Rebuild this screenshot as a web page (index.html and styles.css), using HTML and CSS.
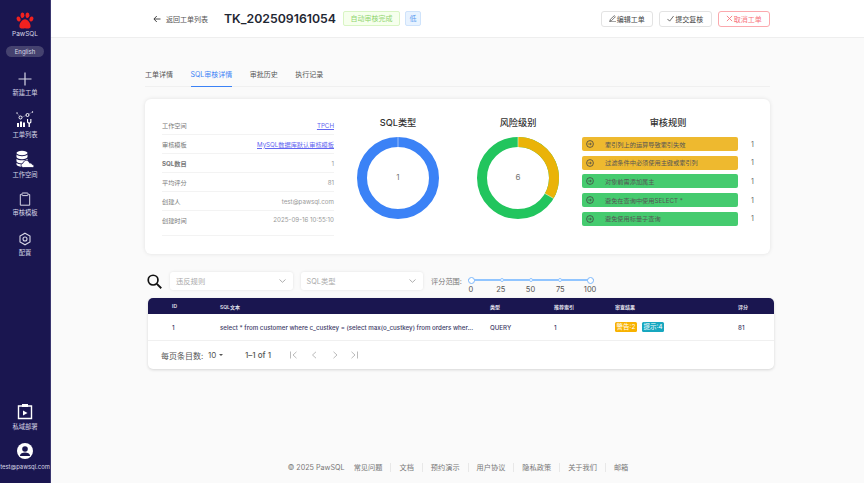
FILE: index.html
```html
<!DOCTYPE html>
<html>
<head>
    <title>PawSQL</title>
    <link rel="stylesheet" href="styles.css">
</head>
<body>
    <svg class="defs" width="0" height="0"><defs>
        <symbol id="rule-icon" viewBox="0 0 8 8"><circle cx="4" cy="4" r="3.400" fill="none" stroke="#444" stroke-width=".8"/><path d="M2.200 4h3M4 2.800L5.300 4 4 5.200" fill="none" stroke="#444" stroke-width=".7"/></symbol>
    </defs></svg>
    <div class="app">
        <aside class="sidebar">
            <div class="logo">
                <svg width="18" height="18" viewBox="0 0 18 18"><g fill="#f0211f"><ellipse cx="2.600" cy="7" rx="1.900" ry="2.600" transform="rotate(-18 2.600 7)"/><ellipse cx="6.500" cy="3.300" rx="1.900" ry="2.800"/><ellipse cx="11.500" cy="3.300" rx="1.900" ry="2.800"/><ellipse cx="15.400" cy="7" rx="1.900" ry="2.600" transform="rotate(18 15.400 7)"/><path d="M9 7.200c3 0 5.600 4 5.600 7 0 2.600-2.600 2.600-5.600 2.100-3 .5-5.600.5-5.600-2.100 0-3 2.600-7 5.600-7z"/></g></svg>
                <div class="logo-name">PawSQL</div>
            </div>
            <div class="lang">English</div>
            <nav class="nav">
                <a class="nav-item">
                    <svg class="nav-icon" width="18" height="18" viewBox="0 0 18 18"><path d="M9 2.500v13M2.500 9h13" stroke="#d8d7e6" stroke-width="1.200" fill="none"/></svg>
                    <span>新建工单</span>
                </a>
                <a class="nav-item tall">
                    <svg class="nav-icon" width="18" height="18" viewBox="0 0 18 18"><g fill="#fff"><rect x="1" y="13" width="2" height="4"/><rect x="4" y="11.500" width="2" height="5.500"/><rect x="7" y="12.500" width="2" height="4.500"/><path d="M11 9h1.100v2.800l1.100.9 1.100-.9V9h1.100v3.400l-1.500 1.300V17h-1.400v-3.300L11 12.400z"/></g><g fill="none" stroke="#fff"><circle cx="4.500" cy="7.500" r="1.500"/><circle cx="11.500" cy="5" r="1.500"/></g><g fill="#fff"><circle cx="1" cy="3" r=".7"/><circle cx="16.500" cy="2" r=".7"/></g><path d="M1 3l2.500 3.300M6 7l4-1.500M13 4l3.500-2" stroke="#fff" stroke-width=".3" fill="none"/></svg>
                    <span>工单列表</span>
                </a>
                <a class="nav-item tall">
                    <svg class="nav-icon" width="18" height="18" viewBox="0 0 18 18"><g fill="#fff"><ellipse cx="6" cy="3" rx="5.500" ry="2.200"/><path d="M.5 4.600v2.500c0 1.200 2.500 2.200 5.500 2.200s5.500-1 5.500-2.200V4.600C10.500 5.700 8.300 6.200 6 6.200S1.500 5.700.5 4.600z"/><path d="M.5 8.700v2.500c0 1.200 2.500 2.200 5.500 2.200s5.500-1 5.500-2.200V8.700c-1 1.100-3.200 1.600-5.500 1.600S1.500 9.800.5 8.700z"/><path d="M.5 12.800v1.700c0 1.200 2.500 2.200 5.500 2.200v-2.400c-2.300 0-4.500-.4-5.500-1.500z"/></g><path d="M7.500 17.500c-1.500 0-2.400-1-2.400-2.200 0-1.100.8-2 1.900-2.100.4-1.800 1.700-2.800 3.300-2.800 1.700 0 3 1.100 3.300 2.700 1.200-.2 2.400.4 2.700 1.500 1 .1 1.700.9 1.700 1.500 0 .7-.6 1.400-1.500 1.400z" fill="#fff" stroke="#1a1650" stroke-width=".8"/></svg>
                    <span>工作空间</span>
                </a>
                <a class="nav-item">
                    <svg class="nav-icon" width="18" height="18" viewBox="0 0 18 18"><path d="M5.500 4.500H4.300v10.700h9.400V4.500h-1.200" stroke="#d8d7e6" fill="none"/><rect x="6" y="3" width="6" height="2.600" rx=".5" stroke="#d8d7e6" fill="none"/></svg>
                    <span>审核模板</span>
                </a>
                <a class="nav-item">
                    <svg class="nav-icon" width="18" height="18" viewBox="0 0 18 18"><path d="M9 3.200l5 2.900v5.800l-5 2.900-5-2.900V6.100z" stroke="#d8d7e6" stroke-width="1.100" fill="none"/><circle cx="9" cy="9" r="2" stroke="#d8d7e6" stroke-width="1.100" fill="none"/></svg>
                    <span>配置</span>
                </a>
            </nav>
            <div class="nav-bottom">
                <a class="nav-item">
                    <svg class="nav-icon" width="16" height="17" viewBox="0 0 16 17"><path d="M5 3H1.500v12.500h13V3H11" stroke="#fff" stroke-width="1.400" fill="none"/><rect x="5" y="1" width="6" height="3" fill="#fff"/><path d="M6 7.500l4.500 2.500L6 12.500z" fill="#fff"/></svg>
                    <span>私域部署</span>
                </a>
                <a class="nav-item user">
                    <svg class="nav-icon" width="16" height="16" viewBox="0 0 16 16"><circle cx="8" cy="8" r="8" fill="#fff"/><circle cx="8" cy="6" r="2.800" fill="#1a1650"/><path d="M3 12.500c0-2 2.500-3 5-3s5 1 5 3v.5H3z" fill="#1a1650"/></svg>
                    <span>test@pawsql.com</span>
                </a>
            </div>
        </aside>

        <div class="main">
            <header class="topbar">
                <a class="back">
                    <svg width="8" height="8" viewBox="0 0 8 8"><path d="M7.500 4H1M3.800 1L.9 4l2.900 3" stroke="#333" stroke-width=".9" fill="none"/></svg>
                    返回工单列表
                </a>
                <h1 class="ticket-id">TK_202509161054</h1>
                <span class="tag tag-done">自动审核完成</span>
                <span class="tag tag-low">低</span>
                <div class="actions">
                    <button class="btn">
                        <svg width="7" height="7" viewBox="0 0 8 8"><path d="M1 7l.5-2L6 .8 7.300 2 2.800 6.500zM0 7.800h8" stroke="#444" stroke-width=".8" fill="none"/></svg>编辑工单
                    </button>
                    <button class="btn">
                        <svg width="7" height="7" viewBox="0 0 8 8"><path d="M.5 4.500L3 7 7.500 1.200" stroke="#444" stroke-width=".9" fill="none"/></svg>提交复核
                    </button>
                    <button class="btn btn-cancel">
                        <svg width="7" height="7" viewBox="0 0 8 8"><path d="M1 1l6 6M7 1L1 7" stroke="#f7747c" fill="none"/></svg>取消工单
                    </button>
                </div>
            </header>

            <div class="content">
                <div class="tabs">
                    <a class="tab">工单详情</a>
                    <a class="tab active">SQL审核详情</a>
                    <a class="tab">审批历史</a>
                    <a class="tab">执行记录</a>
                </div>

                <section class="card">
                    <div class="info">
                        <div class="info-row"><span>工作空间</span><a>TPCH</a></div>
                        <div class="info-row"><span>审核模板</span><a>MySQL数据库默认审核模板</a></div>
                        <div class="info-row"><span class="strong">SQL数目</span><em>1</em></div>
                        <div class="info-row"><span>平均评分</span><em>81</em></div>
                        <div class="info-row"><span>创建人</span><em>test@pawsql.com</em></div>
                        <div class="info-row last"><span>创建时间</span><em>2025-09-16 10:55:10</em></div>
                    </div>

                    <div class="chart">
                        <h2>SQL类型</h2>
                        <div class="donut">
                            <svg width="84" height="84" viewBox="0 0 84 84"><circle cx="42" cy="42" r="36" fill="none" stroke="#3b82f6" stroke-width="10"/><path d="M42 1v10" stroke="#dce8fb" stroke-width=".6"/></svg>
                            <span class="donut-num">1</span>
                        </div>
                    </div>

                    <div class="chart">
                        <h2>风险级别</h2>
                        <div class="donut">
                            <svg width="84" height="84" viewBox="0 0 84 84"><circle cx="42" cy="42" r="36" fill="none" stroke="#22c55e" stroke-width="10"/><path d="M42 6A36 36 0 0 1 73.200 60" fill="none" stroke="#eab308" stroke-width="10"/><path d="M42 1v10M68.900 57.500l8.700 5" stroke="#e8f5e4" stroke-width=".6"/></svg>
                            <span class="donut-num">6</span>
                        </div>
                    </div>

                    <div class="rules">
                        <h2>审核规则</h2>
                        <div class="rule-row"><div class="rule warn"><svg class="rule-dot"><use href="#rule-icon"/></svg>索引列上的运算导致索引失效</div><span>1</span></div>
                        <div class="rule-row"><div class="rule warn"><svg class="rule-dot"><use href="#rule-icon"/></svg>过滤条件中必须使用主键或索引列</div><span>1</span></div>
                        <div class="rule-row"><div class="rule ok"><svg class="rule-dot"><use href="#rule-icon"/></svg>对象前需添加属主</div><span>1</span></div>
                        <div class="rule-row"><div class="rule ok"><svg class="rule-dot"><use href="#rule-icon"/></svg>避免在查询中使用SELECT *</div><span>1</span></div>
                        <div class="rule-row"><div class="rule ok"><svg class="rule-dot"><use href="#rule-icon"/></svg>避免使用标量子查询</div><span>1</span></div>
                    </div>
                </section>

                <div class="filters">
                    <svg width="15" height="15" viewBox="0 0 16 16"><circle cx="6.500" cy="6.500" r="5.200" stroke="#111" stroke-width="1.800" fill="none"/><path d="M10.500 10.500l4.700 4.700" stroke="#111" stroke-width="2" fill="none"/></svg>
                    <div class="select">违反规则<svg width="7" height="4" viewBox="0 0 7 4"><path d="M.5.500l3 2.800 3-2.800" stroke="#999" stroke-width=".8" fill="none"/></svg></div>
                    <div class="select">SQL类型<svg width="7" height="4" viewBox="0 0 7 4"><path d="M.5.500l3 2.800 3-2.800" stroke="#999" stroke-width=".8" fill="none"/></svg></div>
                    <span class="range-label">评分范围:</span>
                    <div class="range">
                        <div class="range-track">
                            <i class="knob"></i><i class="tick"></i><i class="tick"></i><i class="tick"></i><i class="knob"></i>
                        </div>
                        <div class="range-marks"><span>0</span><span>25</span><span>50</span><span>75</span><span>100</span></div>
                    </div>
                </div>

                <div class="table">
                    <div class="tr thead">
                        <span>ID</span><span>SQL文本</span><span>类型</span><span>推荐索引</span><span>审查结果</span><span>评分</span>
                    </div>
                    <div class="tr tbody">
                        <span>1</span>
                        <span class="sql">select * from customer where c_custkey = (select max(o_custkey) from orders wher...</span>
                        <span>QUERY</span>
                        <span>1</span>
                        <span class="results"><b class="chip chip-warn">警告:2</b><b class="chip chip-tip">提示:4</b></span>
                        <span>81</span>
                    </div>
                    <div class="pager">
                        <span class="per-page">每页条目数:</span>
                        <span class="page-size">10<i class="caret"></i></span>
                        <span class="page-range">1–1 of 1</span>
                        <svg class="page-icons" width="71" height="8" viewBox="0 0 71 8"><g stroke="#aaa" stroke-width=".8" fill="none"><path d="M.5 .5v7M6.500 .8L3 4l3.500 3.200M26 .8L22.500 4 26 7.200M43.500 .8L47 4l-3.500 3.200M61.500 .8L65 4l-3.500 3.200M67.500 .5v7"/></g></svg>
                    </div>
                </div>
            </div>

            <footer class="footer">
                <span class="copy">© 2025 PawSQL</span>
                <a>常见问题</a><a>文档</a><a>预约演示</a><a>用户协议</a><a>隐私政策</a><a>关于我们</a><a>邮箱</a>
            </footer>
        </div>
    </div>
</body>
</html>
```

FILE: styles.css
```css
* {
    box-sizing: border-box;
}

body {
    font-family: Inter, "Noto Sans CJK SC", sans-serif;
    background-color: #fafafa;
    color: #333;
    margin: 0;
    font-size: 7px;
}

.defs {
    display: block;
    height: 0;
}

.app {
    display: flex;
    height: 483px;
    overflow: hidden;
}

/* sidebar */
.sidebar {
    width: 51px;
    flex-shrink: 0;
    background-color: #1a1650;
    border-right: 1px solid #3a3770;
    color: #d8d7e6;
    display: flex;
    flex-direction: column;
    align-items: center;
    padding-top: 12px;
    padding-bottom: 12px;
}

.logo {
    display: flex;
    flex-direction: column;
    align-items: center;
}

.logo svg {
    display: block;
}

.logo-name {
    font-size: 6.500px;
    line-height: 9px;
}

.lang {
    width: 38px;
    height: 11px;
    line-height: 11px;
    margin-top: 7px;
    border-radius: 6px;
    background-color: #45426f;
    text-align: center;
    font-size: 6px;
}

.nav {
    margin-top: 12.500px;
    display: flex;
    flex-direction: column;
    align-items: center;
}

.nav-item {
    display: flex;
    flex-direction: column;
    align-items: center;
    font-size: 6.300px;
    line-height: 9px;
    white-space: nowrap;
}

.nav-icon {
    display: block;
    margin-bottom: 3px;
}

.nav .nav-item {
    height: 40px;
}

.nav .nav-icon {
    margin-bottom: 1px;
}

.nav .tall .nav-icon {
    margin-bottom: 3px;
}

.user {
    font-size: 5.900px;
}

.nav-bottom {
    margin-top: auto;
    display: flex;
    flex-direction: column;
    align-items: center;
    gap: 11px;
}

/* top bar */
.main {
    flex: 1;
    min-width: 0;
    display: flex;
    flex-direction: column;
}

.topbar {
    height: 38px;
    flex-shrink: 0;
    background-color: #fff;
    border-bottom: 1px solid #eee;
    display: flex;
    align-items: center;
    padding-left: 102px;
    padding-right: 94px;
}

.back {
    display: flex;
    align-items: center;
    gap: 5px;
    color: #555;
    font-size: 7px;
    width: 71px;
}

.ticket-id {
    font-size: 12.300px;
    font-weight: 600;
    color: #1f2733;
    margin: 0;
    width: 119px;
    white-space: nowrap;
}

.tag {
    height: 15px;
    line-height: 13px;
    border-radius: 2px;
    border: 1px solid;
    text-align: center;
    font-size: 7px;
}

.tag-done {
    width: 57px;
    color: #8fd46f;
    background-color: #f6ffed;
    border-color: #d9f5c4;
}

.tag-low {
    width: 16px;
    margin-left: 5px;
    color: #5b9cf0;
    background-color: #e8f3ff;
    border-color: #cfe3fb;
}

.actions {
    margin-left: auto;
    display: flex;
    gap: 6px;
}

.btn {
    height: 16px;
    width: 52.500px;
    padding: 0;
    display: flex;
    align-items: center;
    justify-content: center;
    gap: 1px;
    font-family: inherit;
    font-size: 7px;
    color: #444;
    background-color: #fff;
    border: 1px solid #e3e3e3;
    border-radius: 3px;
}

.btn-cancel {
    color: #f7747c;
    border-color: #fba9ae;
}

/* tabs */
.content {
    padding-left: 94px;
    padding-right: 94px;
}

.tabs {
    margin-top: 27px;
    height: 22px;
    display: flex;
    border-bottom: 1px solid #f0f0f0;
    font-size: 7px;
    color: #555;
}

.tab {
    height: 22px;
    line-height: 19px;
    margin-right: 17.500px;
    white-space: nowrap;
}

.tab.active {
    color: #3b82f6;
    border-bottom: 1px solid #3b82f6;
}

/* summary card */
.card {
    margin-top: 12px;
    height: 155px;
    background-color: #fff;
    border-radius: 6px;
    box-shadow: 0 0 4px rgba(0, 0, 0, 0.1);
    display: flex;
    padding-left: 17px;
    padding-top: 17px;
}

.info {
    width: 172px;
}

.info-row {
    height: 19px;
    display: flex;
    justify-content: space-between;
    align-items: center;
    border-bottom: 1px solid #f3f3f3;
    color: #777;
    font-size: 6.200px;
    white-space: nowrap;
}

.info-row.last {
    height: 25px;
    align-items: flex-start;
    padding-top: 5px;
}

.info-row a {
    color: #6366f1;
    text-decoration: underline;
}

.info-row em {
    font-style: normal;
    color: #999;
}

.strong {
    font-weight: 700;
}

.chart {
    width: 84px;
    margin-left: 22px;
    display: flex;
    flex-direction: column;
    align-items: center;
}

.chart + .chart {
    margin-left: 36px;
}

.chart h2,
.rules h2 {
    font-size: 9.200px;
    font-weight: 500;
    line-height: 14px;
    margin: 0;
    color: #333;
    text-align: center;
}

.donut {
    margin-top: 6px;
    width: 84px;
    height: 84px;
    position: relative;
}

.donut svg {
    display: block;
}

.donut-num {
    position: absolute;
    top: 36px;
    left: 0;
    width: 84px;
    text-align: center;
    font-size: 8px;
    color: #777;
}

.rules {
    margin-left: 22px;
    width: 175px;
}

.rules h2 {
    width: 172px;
    margin-bottom: 5px;
}

.rule-row {
    display: flex;
    align-items: center;
    height: 18.600px;
    color: #666;
    font-size: 7px;
}

.rule-row span {
    margin-left: 13px;
}

.rule {
    width: 156px;
    height: 14px;
    border-radius: 2px;
    display: flex;
    align-items: center;
    color: #555;
    padding-left: 4px;
    font-size: 6.200px;
    white-space: nowrap;
}

.rule.warn {
    background-color: #eeb92f;
}

.rule.ok {
    background-color: #45cb6f;
}

.rule-dot {
    width: 8px;
    height: 8px;
    margin-right: 11px;
    flex-shrink: 0;
}

/* filters */
.filters {
    margin-top: 17px;
    height: 20px;
    display: flex;
    align-items: center;
    margin-left: 2px;
}

.select {
    width: 122.500px;
    height: 18px;
    margin-left: 8px;
    background-color: #fff;
    border-radius: 3px;
    box-shadow: 0 0 3px rgba(0, 0, 0, 0.1);
    color: #aaa;
    font-size: 7.300px;
    display: flex;
    align-items: center;
    justify-content: space-between;
    padding-left: 6px;
    padding-right: 7px;
}

.range-label {
    margin-left: 8px;
    font-size: 7.200px;
    color: #777;
    width: 25px;
    white-space: nowrap;
}

.range {
    width: 149px;
    margin-top: 11px;
}

.range-track {
    height: 2px;
    margin-left: 11.500px;
    margin-right: 11.500px;
    background-color: #91c5ff;
    display: flex;
    align-items: center;
    justify-content: space-between;
}

.knob {
    width: 7px;
    height: 7px;
    border-radius: 50%;
    background-color: #fff;
    border: 1px solid #7db8fb;
}

.tick {
    width: 4px;
    height: 4px;
    border-radius: 50%;
    background-color: #fff;
    border: 1px solid #91c5ff;
}

.range-marks {
    margin-top: 4px;
    display: flex;
    font-size: 7.500px;
    line-height: 9px;
    color: #555;
}

.range-marks span {
    width: 29.800px;
    text-align: center;
}

/* result table */
.table {
    margin-top: 7px;
    margin-left: 3px;
    margin-right: -4px;
    background-color: #fff;
    border-radius: 5px;
    box-shadow: 0 1px 3px rgba(0, 0, 0, 0.15);
    overflow: hidden;
}

.tr {
    display: grid;
    grid-template-columns: 48px 270px 64px 61px 123px 1fr;
    align-items: center;
    padding-left: 24px;
}

.thead {
    height: 16px;
    background-color: #1a1650;
    color: #e4e4ee;
    font-size: 5px;
    font-weight: 600;
}

.tbody {
    height: 27px;
    border-bottom: 1px solid #f0f0f0;
    color: #3c3a66;
    font-size: 6.200px;
    font-weight: 500;
}

.sql {
    white-space: nowrap;
}

.results {
    display: flex;
    gap: 5px;
}

.chip {
    width: 22px;
    height: 10px;
    line-height: 10px;
    text-align: center;
    border-radius: 1.500px;
    color: #fff;
    font-weight: 400;
    font-size: 6.500px;
}

.chip-warn {
    background-color: #f8b200;
}

.chip-tip {
    background-color: #17a7bf;
}

.pager {
    height: 28px;
    display: flex;
    align-items: center;
    padding-left: 13px;
    color: #555;
    font-size: 8px;
}

.per-page {
    width: 47px;
    white-space: nowrap;
}

.page-size {
    width: 37px;
    display: flex;
    align-items: center;
    gap: 3px;
}

.caret {
    width: 0;
    height: 0;
    border-left: 2.500px solid transparent;
    border-right: 2.500px solid transparent;
    border-top: 2.500px solid #555;
}

.page-range {
    width: 45px;
    white-space: nowrap;
    font-weight: 500;
}

/* footer */
.footer {
    margin-top: auto;
    height: 32px;
    display: flex;
    align-items: center;
    justify-content: center;
    color: #777;
    font-size: 7.200px;
    padding-left: 9px;
    white-space: nowrap;
}

.copy {
    margin-right: 1px;
}

.footer a {
    padding-left: 8px;
    padding-right: 8px;
    line-height: 9px;
    border-right: 1px solid #e8e8e8;
}

.footer a:last-child {
    border-right: none;
}
```
